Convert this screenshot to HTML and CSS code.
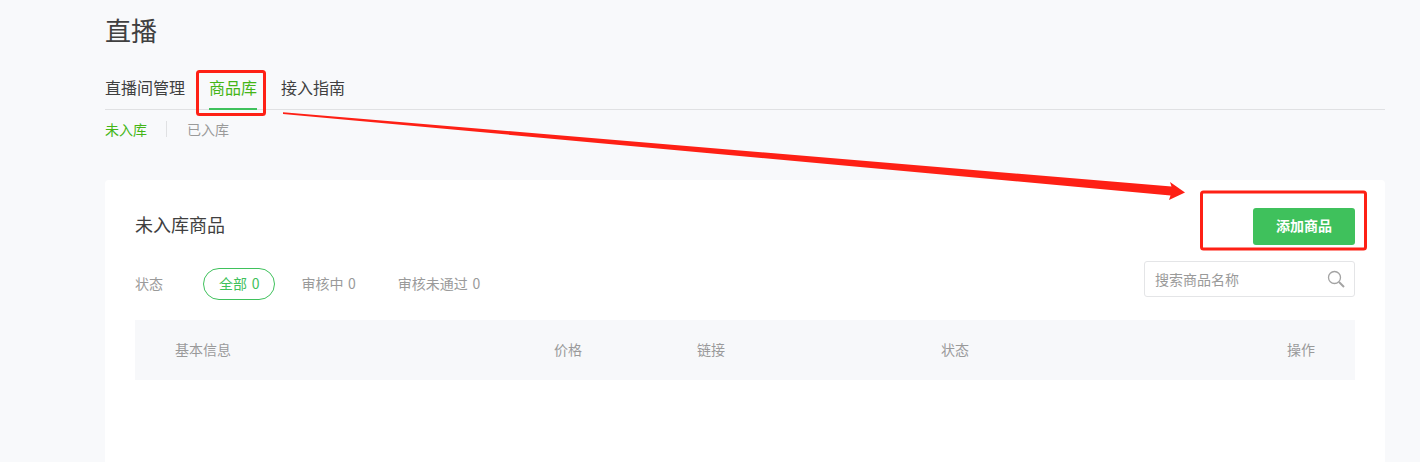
FILE: index.html
```html
<!DOCTYPE html>
<html lang="zh">
<head>
<meta charset="utf-8">
<title>直播</title>
<link rel="stylesheet" href="styles.css">
</head>
<body>
<main class="page">
  <h1 class="title">直播</h1>
  <nav class="tabs">
    <a class="tab">直播间管理</a>
    <a class="tab tab-active">商品库</a>
    <a class="tab">接入指南</a>
  </nav>
  <div class="subtabs">
    <a class="subtab subtab-active">未入库</a>
    <span class="subdivider"></span>
    <a class="subtab">已入库</a>
  </div>
  <section class="card">
    <header class="card-head">
      <h2 class="card-title">未入库商品</h2>
      <button class="add-btn">添加商品</button>
    </header>
    <div class="filters">
      <span class="filter-label">状态</span>
      <span class="pill pill-active">全部 0</span>
      <span class="pill">审核中 0</span>
      <span class="pill">审核未通过 0</span>
      <div class="search">
        <span class="search-text">搜索商品名称</span>
        <svg class="search-icon" width="18" height="18" viewBox="0 0 18 18" fill="none" stroke="#a3a3a3" stroke-width="1.3"><circle cx="7.5" cy="7.5" r="6"/><path d="M12 12l5 5" stroke-width="2"/></svg>
      </div>
    </div>
    <div class="thead">
      <span class="col col-info">基本信息</span>
      <span class="col col-price">价格</span>
      <span class="col col-link">链接</span>
      <span class="col col-status">状态</span>
      <span class="col col-op">操作</span>
    </div>
  </section>
</main>
<svg class="annotation" width="1420" height="462" viewBox="0 0 1420 462" fill="none">
  <rect x="197.5" y="71.5" width="67" height="43" rx="2" stroke="#fe2015" stroke-width="3"/>
  <rect x="1201.5" y="192" width="164" height="57" rx="2" stroke="#fe2015" stroke-width="3"/>
  <path d="M283 112.2 L1171.5 186.5 L1170 182 L1185 192.5 L1169 200 L1170.5 195.5 L283 114 Z" fill="#fe2015"/>
</svg>
</body>
</html>
```
FILE: styles.css
```css
* { box-sizing: border-box; }
html, body { margin: 0; height: 462px; overflow: hidden; }
body {
  background: #f8f9fb;
  font-family: "Noto Sans CJK SC", "Liberation Sans", sans-serif;
  color: #353535;
}
.page { width: 1280px; margin-left: 105px; }
.title { margin: 0; height: 62px; padding-top: 11px; font-size: 26px; line-height: 38px; font-weight: 400; color: #404040; }
.tabs { display: flex; gap: 24px; height: 48px; border-bottom: 1px solid #e0e1e3; }
.tab { height: 48px; padding-top: 13px; font-size: 16px; line-height: 24px; color: #404040; }
.tab-active { color: #44b516; border-bottom: 2px solid #3fc15c; }
.subtabs { display: flex; align-items: center; height: 38px; }
.subtab { font-size: 14px; line-height: 20px; color: #9a9a9a; }
.subtab-active { color: #44b516; }
.subdivider { width: 1px; height: 16px; margin: 0 20px 0 19px; background: #e0e1e3; }
.card { margin-top: 32px; height: 300px; background: #fff; border-radius: 4px; padding: 28px 30px 0; }
.card-head { display: flex; justify-content: space-between; height: 53px; }
.card-title { margin: 0; font-size: 18px; line-height: 32px; font-weight: 400; color: #404040; }
.add-btn { width: 102px; height: 37px; border: 0; border-radius: 3px; background: #3fc15c; color: #fff; font: 700 14px/35px "Noto Sans CJK SC", sans-serif; padding: 0 0 2px; }
.filters { display: flex; align-items: flex-start; height: 59px; }
.filter-label { width: 68px; font-size: 14px; line-height: 20px; color: #9a9a9a; margin-top: 12px; }
.pill { height: 32px; padding: 0 15px; margin-right: 10px; margin-top: 7px; border: 1px solid transparent; border-radius: 16px; font-size: 14px; line-height: 28px; word-spacing: 1.5px; color: #9a9a9a; white-space: nowrap; }
.pill-active { color: #3fc15c; border-color: #3fc15c; }
.search { display: flex; align-items: center; justify-content: space-between; width: 211px; height: 36px; margin-left: auto; padding: 0 9px 0 10px; background: #fff; border: 1px solid #e4e5e7; border-radius: 3px; }
.search-text { font-size: 14px; color: #9a9a9a; line-height: 20px; }
.search-icon { display: block; }
.thead { display: grid; grid-template-columns: 379px 143px 244px 1fr auto; align-items: center; height: 60px; padding: 0 40px 2px; background: #f7f8fa; }
.col { font-size: 14px; line-height: 20px; color: #9a9a9a; }
.annotation { position: absolute; left: 0; top: 0; pointer-events: none; }
```
